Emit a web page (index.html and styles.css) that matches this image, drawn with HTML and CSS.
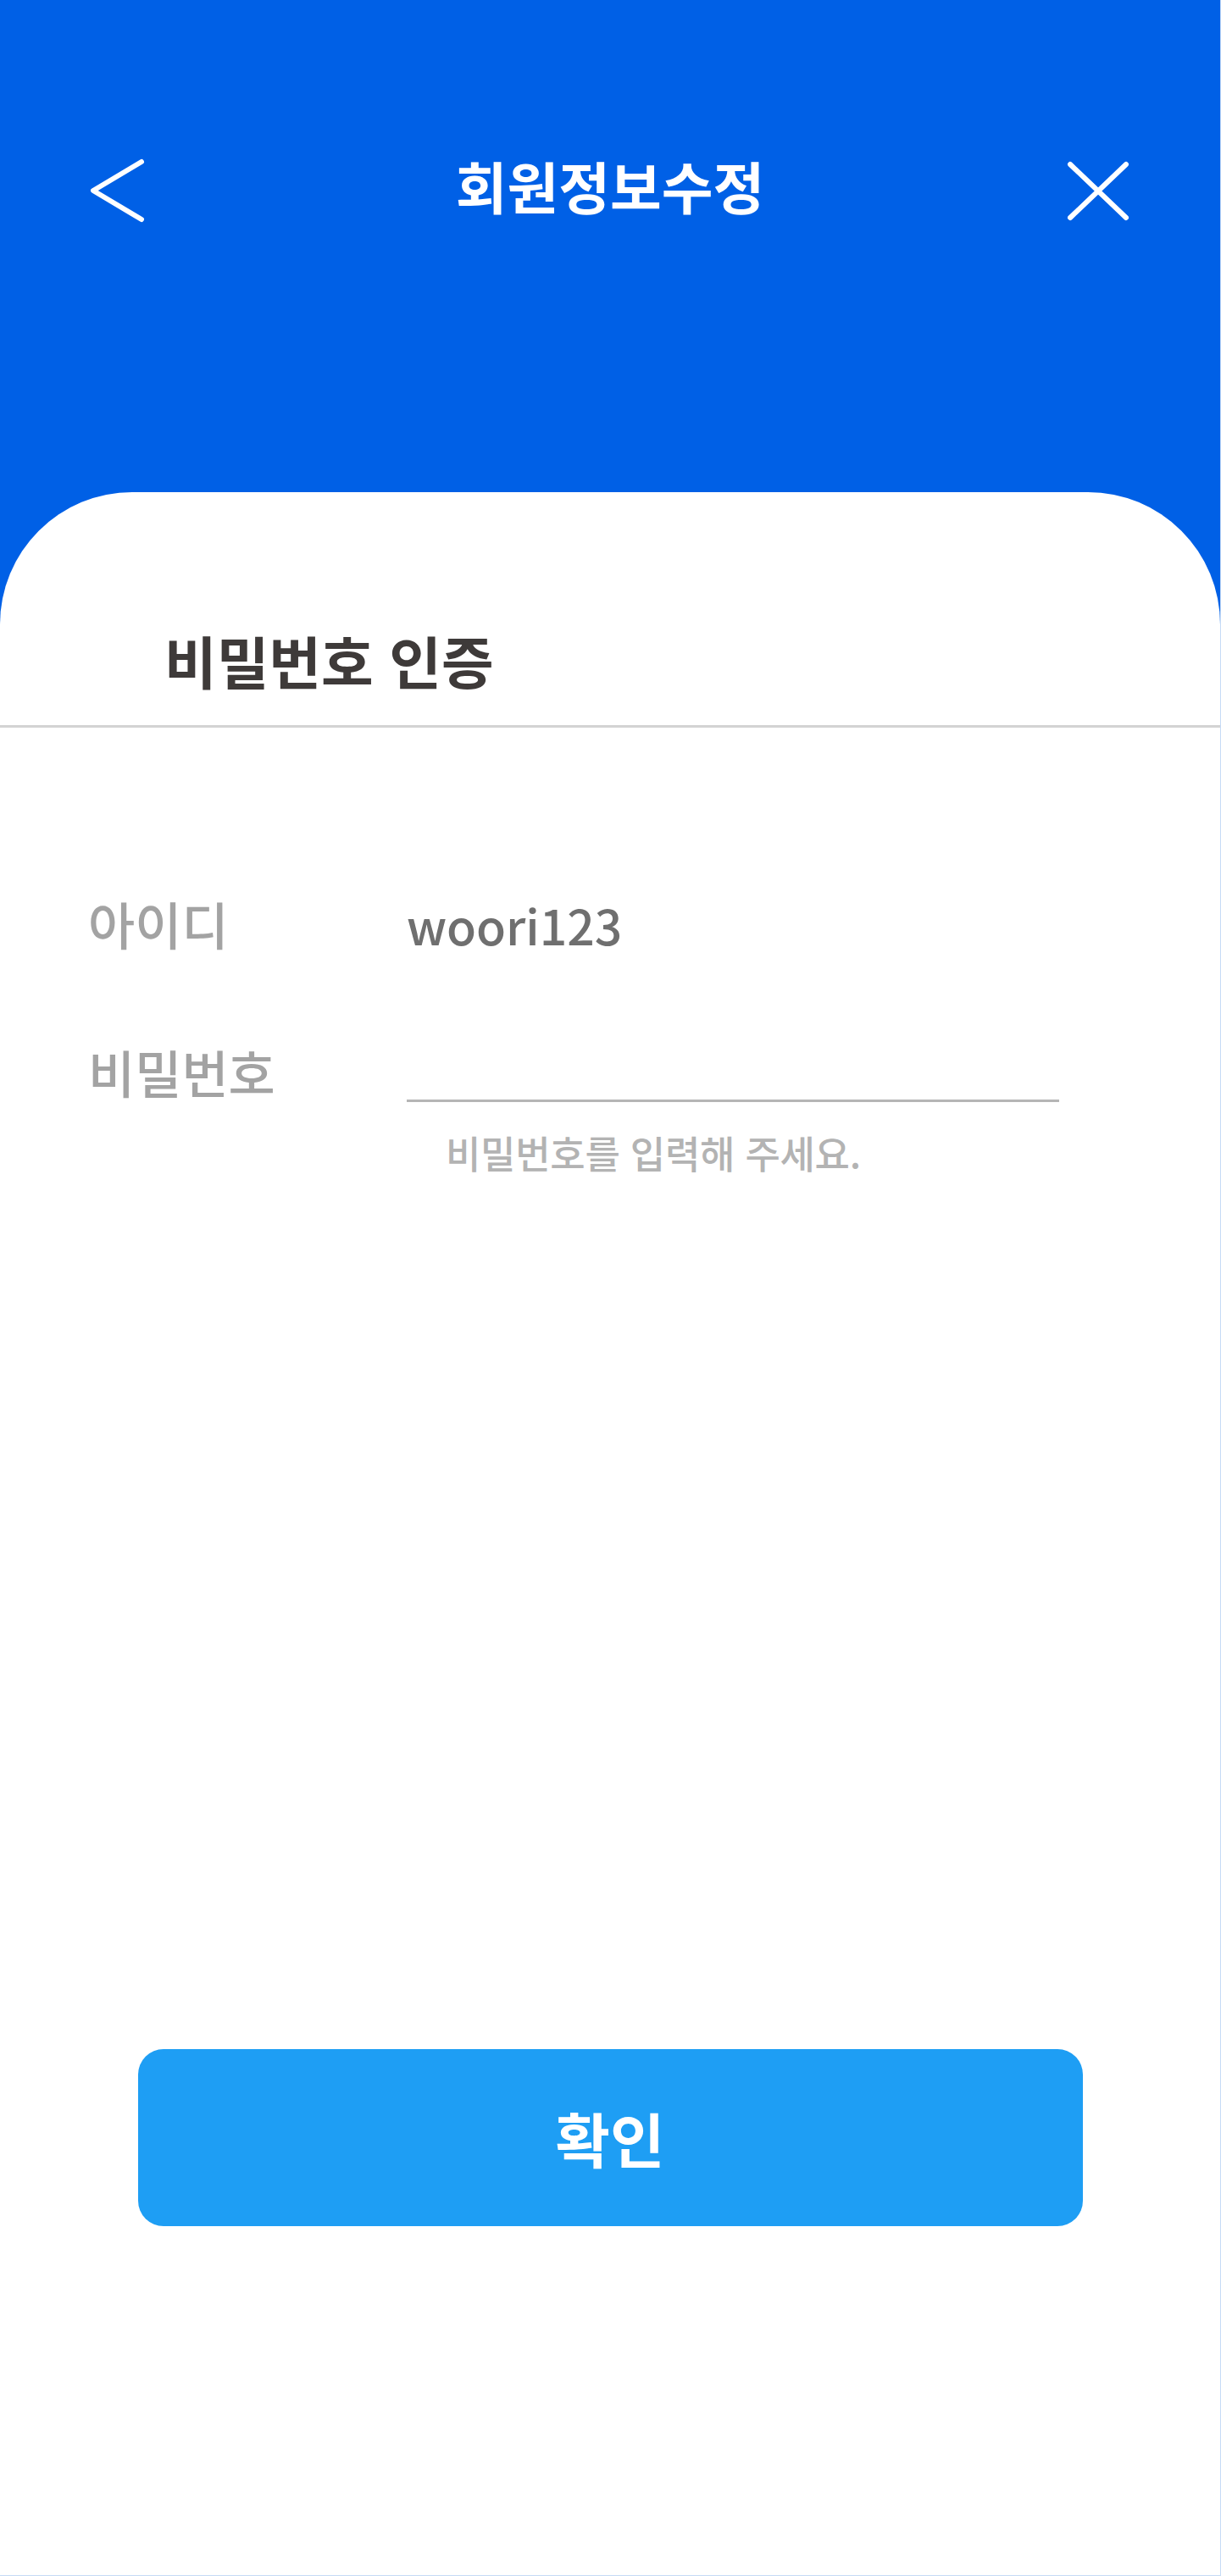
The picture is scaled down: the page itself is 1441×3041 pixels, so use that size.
FILE: index.html
```html
<!DOCTYPE html>
<html lang="ko">
<head>
<meta charset="utf-8">
<title>회원정보수정</title>
<link rel="stylesheet" href="styles.css">
</head>
<body>
<div class="screen">
  <header class="hero">
    <nav class="nav">
      <button class="icon-btn back" aria-label="뒤로">
        <svg width="76" height="88" viewBox="0 0 76 88" fill="none" stroke="#fff" stroke-width="6" stroke-linecap="round" stroke-linejoin="round"><polyline points="67,13 10,47 67,81"/></svg>
      </button>
      <h1 class="title">회원정보수정</h1>
      <button class="icon-btn close" aria-label="닫기">
        <svg width="90" height="88" viewBox="0 0 90 88" fill="none" stroke="#fff" stroke-width="6" stroke-linecap="round"><line x1="13" y1="16" x2="79" y2="79"/><line x1="79" y1="16" x2="13" y2="79"/></svg>
      </button>
    </nav>
  </header>
  <main class="card">
    <h2 class="section-title">비밀번호 인증</h2>
    <div class="form">
      <div class="row row-id">
        <span class="label">아이디</span>
        <span class="value">woori123</span>
      </div>
      <div class="row row-pw">
        <span class="label">비밀번호</span>
        <div class="field">
          <input class="input" type="password" aria-label="비밀번호">
          <p class="hint">비밀번호를 입력해 주세요.</p>
        </div>
      </div>
    </div>
    <div class="actions">
      <button class="confirm">확인</button>
    </div>
  </main>
</div>
</body>
</html>
```

FILE: styles.css
```css
* { box-sizing: border-box; }
html, body { margin: 0; padding: 0; background: #fff; }
body { font-family: "Noto Sans CJK KR", "Noto Sans", sans-serif; }

.screen {
  width: 1441px;
  height: 3041px;
  border-right: 1px solid #c6dbf6;
  border-bottom: 1px solid #c6dbf6;
  display: flex;
  flex-direction: column;
  background: #fff;
  overflow: hidden;
}

.hero {
  background: #0060e6;
  height: 741px;
  padding-top: 178px;
  flex: none;
}

.nav {
  display: grid;
  grid-template-columns: 1fr auto 1fr;
  align-items: center;
  height: 88px;
  padding: 0 100px;
}

.icon-btn {
  background: none;
  border: 0;
  padding: 0;
  margin: 0;
  display: block;
  line-height: 0;
}
.icon-btn svg { display: block; }
.back { justify-self: start; }
.close { justify-self: end; }

.title {
  margin: 0;
  color: #fff;
  font-size: 66px;
  font-weight: 700;
  line-height: 1;
  letter-spacing: 0;
  position: relative;
  top: -4px;
}

.card {
  flex: 1;
  margin-top: -160px;
  background: #fff;
  border-radius: 156px 156px 0 0;
  display: flex;
  flex-direction: column;
}

.section-title {
  margin: 0;
  padding: 164px 0 44px 194px;
  font-size: 67px;
  font-weight: 700;
  line-height: 1;
  color: #3e3a39;
  letter-spacing: 0;
  border-bottom: 3px solid #d3d3d3;
}

.form {
  padding: 201px 0 0 104px;
  display: flex;
  flex-direction: column;
  gap: 115px;
}

.row {
  display: grid;
  grid-template-columns: 376px 770px;
}
.row-id { align-items: baseline; }
.row-pw { align-items: start; }

.label {
  font-size: 60px;
  font-weight: 500;
  line-height: 1;
  color: #a3a3a3;
  letter-spacing: 0;
}

.value {
  font-size: 57px;
  font-weight: 500;
  line-height: 1;
  color: #6f6f6f;
  letter-spacing: 0;
}

.field { display: flex; flex-direction: column; }

.input {
  display: block;
  width: 770px;
  height: 66px;
  margin: 0;
  padding: 0;
  border: 0;
  border-bottom: 3px solid #b5b5b5;
  background: transparent;
  outline: none;
  font: inherit;
}

.hint {
  margin: 37px 0 0 46px;
  font-size: 45px;
  font-weight: 500;
  line-height: 1;
  color: #b3b3b3;
  letter-spacing: -0.3px;
}

.actions {
  margin-top: auto;
  padding-bottom: 412px;
  display: flex;
  justify-content: center;
}

.confirm {
  width: 1115px;
  height: 209px;
  border: 0;
  border-radius: 30px;
  background: #1e9ef4;
  color: #fff;
  font-family: inherit;
  font-size: 70px;
  font-weight: 700;
  line-height: 1;
  padding: 0;
}
```
